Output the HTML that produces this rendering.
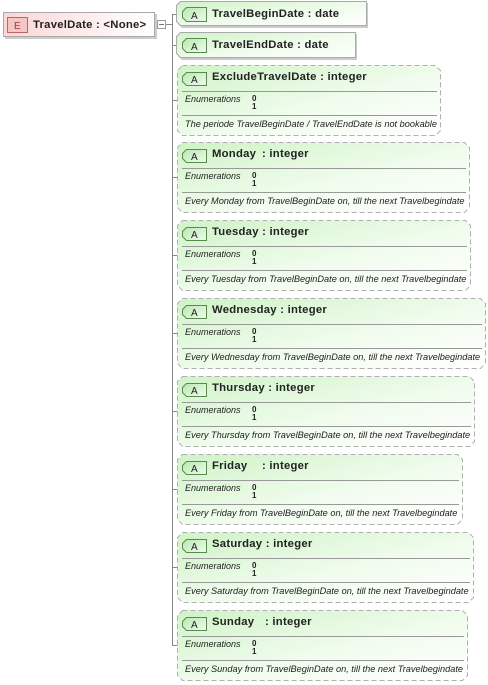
<!DOCTYPE html>
<html><head><meta charset="utf-8"><style>
html,body{margin:0;padding:0;background:#fff;width:488px;height:685px;overflow:hidden}
svg{display:block}
text{font-family:"Liberation Sans",Arial,sans-serif;fill:#222}
.t{font-size:11.3px;font-weight:bold;white-space:pre;letter-spacing:0.25px}
.en{font-size:9px;font-style:italic}
.n{font-size:8px;font-weight:bold}
.d{font-size:9.2px;font-style:italic}
polygon[stroke-dasharray]{stroke:#b0b0b0}
</style></head><body>
<svg width="488" height="685" viewBox="0 0 488 685" xmlns="http://www.w3.org/2000/svg">
<defs>
<linearGradient id="g" x1="0" y1="0" x2="1" y2="1"><stop offset="0" stop-color="#cff3c6"/><stop offset="0.55" stop-color="#f0fced"/><stop offset="1" stop-color="#ffffff"/></linearGradient>
<linearGradient id="p" x1="0" y1="0" x2="1" y2="0"><stop offset="0" stop-color="#fcd6d6"/><stop offset="1" stop-color="#ffffff"/></linearGradient>
<linearGradient id="ba" x1="0" y1="0" x2="1" y2="1"><stop offset="0" stop-color="#b9e8b0"/><stop offset="1" stop-color="#f0fbee"/></linearGradient>
</defs>
<g stroke="#888" stroke-width="1" fill="none">
<line x1="172.5" y1="14" x2="172.5" y2="645"/>
<line x1="165" y1="24.5" x2="172.5" y2="24.5"/>
<line x1="172" y1="14.5" x2="178" y2="14.5"/>
<line x1="172" y1="45.5" x2="178" y2="45.5"/>
<line x1="172" y1="100.5" x2="178" y2="100.5"/>
<line x1="172" y1="177.5" x2="178" y2="177.5"/>
<line x1="172" y1="255.5" x2="178" y2="255.5"/>
<line x1="172" y1="333.5" x2="178" y2="333.5"/>
<line x1="172" y1="411.5" x2="178" y2="411.5"/>
<line x1="172" y1="489.5" x2="178" y2="489.5"/>
<line x1="172" y1="567.5" x2="178" y2="567.5"/>
<line x1="172" y1="645.5" x2="178" y2="645.5"/>
</g>
<rect x="5" y="14" width="152" height="25" fill="#ccc"/>
<rect x="3.5" y="12.5" width="151" height="24" fill="url(#p)" stroke="#aaa"/>
<rect x="7.5" y="17.5" width="20" height="15" fill="#f6c6c6" stroke="#b66"/>
<text x="14" y="29" style="font-size:10px;fill:#a33">E</text>
<text class="t" x="33" y="28">TravelDate : &lt;None&gt;</text>
<rect x="157.5" y="20.5" width="8" height="8" fill="#fff" stroke="#999"/>
<line x1="159" y1="24.5" x2="164" y2="24.5" stroke="#777"/>

<g>
<polygon points="182,3 368,3 368,28 182,28 178,24 178,7" fill="#ccc"/>
<polygon points="180.5,1.5 366.5,1.5 366.5,25.5 180.5,25.5 176.5,21.5 176.5,5.5" fill="url(#g)" stroke="#aaa"/>
<path d="M186.5,7.5 H206.5 V21.5 H186.5 L182.5,17.5 V11.5 Z" fill="url(#ba)" stroke="#5a8a50"/>
<text x="191" y="19" style="font-size:10px">A</text>
<text class="t" x="212" y="17">TravelBeginDate : date</text>

<polygon points="182,34 357,34 357,60 182,60 178,56 178,38" fill="#ccc"/>
<polygon points="180.5,32.5 355.5,32.5 355.5,57.5 180.5,57.5 176.5,53.5 176.5,36.5" fill="url(#g)" stroke="#aaa"/>
<path d="M186.5,38.5 H206.5 V52.5 H186.5 L182.5,48.5 V42.5 Z" fill="url(#ba)" stroke="#5a8a50"/>
<text x="191" y="50" style="font-size:10px">A</text>
<text class="t" x="212" y="48">TravelEndDate : date</text>
</g>

<g>
<g transform="translate(0,65)">
<polygon points="182.5,0.5 435.5,0.5 440.5,5.5 440.5,65.5 435.5,70.5 182.5,70.5 177.5,65.5 177.5,5.5" fill="url(#g)" stroke="#aaa" stroke-dasharray="5,3"/>
<path d="M186.5,7.5 H206.5 V20.5 H186.5 L182.5,16.5 V11.5 Z" fill="url(#ba)" stroke="#5a8a50"/>
<text x="191" y="18" style="font-size:10px">A</text>
<text class="t" x="212" y="15">ExcludeTravelDate : integer</text>
<line x1="182" y1="26.5" x2="437" y2="26.5" stroke="#999"/>
<text class="en" x="185" y="37">Enumerations</text><text class="n" x="252" y="36">0</text><text class="n" x="252" y="44">1</text>
<line x1="182" y1="50.5" x2="437" y2="50.5" stroke="#999"/>
<text class="d" x="185" y="62">The periode TravelBeginDate / TravelEndDate is not bookable</text>
</g>
<g transform="translate(0,142)">
<polygon points="182.5,0.5 464.5,0.5 469.5,5.5 469.5,65.5 464.5,70.5 182.5,70.5 177.5,65.5 177.5,5.5" fill="url(#g)" stroke="#aaa" stroke-dasharray="5,3"/>
<path d="M186.5,7.5 H206.5 V20.5 H186.5 L182.5,16.5 V11.5 Z" fill="url(#ba)" stroke="#5a8a50"/>
<text x="191" y="18" style="font-size:10px">A</text>
<text class="t" x="212" y="15">Monday</text><text class="t" x="262" y="15">: integer</text>
<line x1="182" y1="26.5" x2="466" y2="26.5" stroke="#999"/>
<text class="en" x="185" y="37">Enumerations</text><text class="n" x="252" y="36">0</text><text class="n" x="252" y="44">1</text>
<line x1="182" y1="50.5" x2="466" y2="50.5" stroke="#999"/>
<text class="d" x="185" y="62">Every Monday from TravelBeginDate on, till the next Travelbegindate</text>
</g>
<g transform="translate(0,220)">
<polygon points="182.5,0.5 465.5,0.5 470.5,5.5 470.5,65.5 465.5,70.5 182.5,70.5 177.5,65.5 177.5,5.5" fill="url(#g)" stroke="#aaa" stroke-dasharray="5,3"/>
<path d="M186.5,7.5 H206.5 V20.5 H186.5 L182.5,16.5 V11.5 Z" fill="url(#ba)" stroke="#5a8a50"/>
<text x="191" y="18" style="font-size:10px">A</text>
<text class="t" x="212" y="15">Tuesday : integer</text>
<line x1="182" y1="26.5" x2="467" y2="26.5" stroke="#999"/>
<text class="en" x="185" y="37">Enumerations</text><text class="n" x="252" y="36">0</text><text class="n" x="252" y="44">1</text>
<line x1="182" y1="50.5" x2="467" y2="50.5" stroke="#999"/>
<text class="d" x="185" y="62">Every Tuesday from TravelBeginDate on, till the next Travelbegindate</text>
</g>
<g transform="translate(0,298)">
<polygon points="182.5,0.5 480.5,0.5 485.5,5.5 485.5,65.5 480.5,70.5 182.5,70.5 177.5,65.5 177.5,5.5" fill="url(#g)" stroke="#aaa" stroke-dasharray="5,3"/>
<path d="M186.5,7.5 H206.5 V20.5 H186.5 L182.5,16.5 V11.5 Z" fill="url(#ba)" stroke="#5a8a50"/>
<text x="191" y="18" style="font-size:10px">A</text>
<text class="t" x="212" y="15">Wednesday : integer</text>
<line x1="182" y1="26.5" x2="482" y2="26.5" stroke="#999"/>
<text class="en" x="185" y="37">Enumerations</text><text class="n" x="252" y="36">0</text><text class="n" x="252" y="44">1</text>
<line x1="182" y1="50.5" x2="482" y2="50.5" stroke="#999"/>
<text class="d" x="185" y="62">Every Wednesday from TravelBeginDate on, till the next Travelbegindate</text>
</g>
<g transform="translate(0,376)">
<polygon points="182.5,0.5 469.5,0.5 474.5,5.5 474.5,65.5 469.5,70.5 182.5,70.5 177.5,65.5 177.5,5.5" fill="url(#g)" stroke="#aaa" stroke-dasharray="5,3"/>
<path d="M186.5,7.5 H206.5 V20.5 H186.5 L182.5,16.5 V11.5 Z" fill="url(#ba)" stroke="#5a8a50"/>
<text x="191" y="18" style="font-size:10px">A</text>
<text class="t" x="212" y="15">Thursday : integer</text>
<line x1="182" y1="26.5" x2="471" y2="26.5" stroke="#999"/>
<text class="en" x="185" y="37">Enumerations</text><text class="n" x="252" y="36">0</text><text class="n" x="252" y="44">1</text>
<line x1="182" y1="50.5" x2="471" y2="50.5" stroke="#999"/>
<text class="d" x="185" y="62">Every Thursday from TravelBeginDate on, till the next Travelbegindate</text>
</g>
<g transform="translate(0,454)">
<polygon points="182.5,0.5 457.5,0.5 462.5,5.5 462.5,65.5 457.5,70.5 182.5,70.5 177.5,65.5 177.5,5.5" fill="url(#g)" stroke="#aaa" stroke-dasharray="5,3"/>
<path d="M186.5,7.5 H206.5 V20.5 H186.5 L182.5,16.5 V11.5 Z" fill="url(#ba)" stroke="#5a8a50"/>
<text x="191" y="18" style="font-size:10px">A</text>
<text class="t" x="212" y="15">Friday</text><text class="t" x="262" y="15">: integer</text>
<line x1="182" y1="26.5" x2="459" y2="26.5" stroke="#999"/>
<text class="en" x="185" y="37">Enumerations</text><text class="n" x="252" y="36">0</text><text class="n" x="252" y="44">1</text>
<line x1="182" y1="50.5" x2="459" y2="50.5" stroke="#999"/>
<text class="d" x="185" y="62">Every Friday from TravelBeginDate on, till the next Travelbegindate</text>
</g>
<g transform="translate(0,532)">
<polygon points="182.5,0.5 468.5,0.5 473.5,5.5 473.5,65.5 468.5,70.5 182.5,70.5 177.5,65.5 177.5,5.5" fill="url(#g)" stroke="#aaa" stroke-dasharray="5,3"/>
<path d="M186.5,7.5 H206.5 V20.5 H186.5 L182.5,16.5 V11.5 Z" fill="url(#ba)" stroke="#5a8a50"/>
<text x="191" y="18" style="font-size:10px">A</text>
<text class="t" x="212" y="15">Saturday : integer</text>
<line x1="182" y1="26.5" x2="470" y2="26.5" stroke="#999"/>
<text class="en" x="185" y="37">Enumerations</text><text class="n" x="252" y="36">0</text><text class="n" x="252" y="44">1</text>
<line x1="182" y1="50.5" x2="470" y2="50.5" stroke="#999"/>
<text class="d" x="185" y="62">Every Saturday from TravelBeginDate on, till the next Travelbegindate</text>
</g>
<g transform="translate(0,610)">
<polygon points="182.5,0.5 462.5,0.5 467.5,5.5 467.5,65.5 462.5,70.5 182.5,70.5 177.5,65.5 177.5,5.5" fill="url(#g)" stroke="#aaa" stroke-dasharray="5,3"/>
<path d="M186.5,7.5 H206.5 V20.5 H186.5 L182.5,16.5 V11.5 Z" fill="url(#ba)" stroke="#5a8a50"/>
<text x="191" y="18" style="font-size:10px">A</text>
<text class="t" x="212" y="15">Sunday</text><text class="t" x="265" y="15">: integer</text>
<line x1="182" y1="26.5" x2="464" y2="26.5" stroke="#999"/>
<text class="en" x="185" y="37">Enumerations</text><text class="n" x="252" y="36">0</text><text class="n" x="252" y="44">1</text>
<line x1="182" y1="50.5" x2="464" y2="50.5" stroke="#999"/>
<text class="d" x="185" y="62">Every Sunday from TravelBeginDate on, till the next Travelbegindate</text>
</g>
</g>
</svg>
</body></html>
